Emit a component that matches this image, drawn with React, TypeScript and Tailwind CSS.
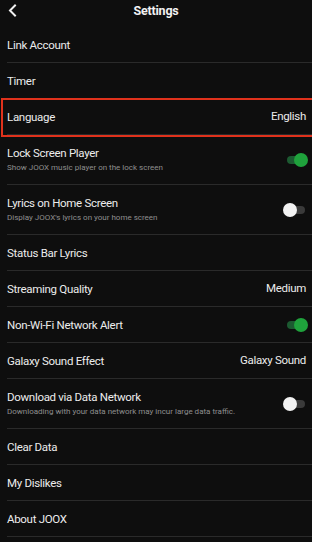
import React from 'react'

type Row = {
  title: string
  sub?: string
  value?: string
  toggle?: boolean
  highlight?: boolean
}

const ROWS: Row[] = [
  { title: 'Link Account' },
  { title: 'Timer' },
  { title: 'Language', value: 'English', highlight: true },
  { title: 'Lock Screen Player', sub: 'Show JOOX music player on the lock screen', toggle: true },
  { title: 'Lyrics on Home Screen', sub: "Display JOOX's lyrics on your home screen", toggle: false },
  { title: 'Status Bar Lyrics' },
  { title: 'Streaming Quality', value: 'Medium' },
  { title: 'Non-Wi-Fi Network Alert', toggle: true },
  { title: 'Galaxy Sound Effect', value: 'Galaxy Sound' },
  { title: 'Download via Data Network', sub: 'Downloading with your data network may incur large data traffic.', toggle: false },
  { title: 'Clear Data' },
  { title: 'My Dislikes' },
  { title: 'About JOOX' },
]

function Toggle({ on }: { on: boolean }) {
  return (
    <div className="relative w-[22px] h-[14px] mr-[5px]">
      <div
        className={`absolute left-[2px] right-[2px] top-[3px] h-[8px] rounded-full ${on ? 'bg-[#1c5a31]' : 'bg-[#3a3a3a]'}`}
      />
      <div
        className={`absolute top-0 w-[14px] h-[14px] rounded-full ${on ? 'right-[-1px] bg-[#1fa23c]' : 'left-[-2px] bg-[#f2f2f2]'}`}
      />
    </div>
  )
}

export default function App() {
  return (
    <div
      className="w-[312px] h-[542px] overflow-hidden bg-[#0e0e0e] text-[#e6e6e6]"
      style={{ fontFamily: 'Roboto, "Liberation Sans", sans-serif' }}
    >
      {/* header */}
      <div className="relative h-[27px] flex items-center justify-center">
        <svg className="absolute left-[8px] top-[4px]" width="9" height="13" viewBox="0 0 9 13">
          <path d="M7 1.5 L2 6.5 L7 11.5" fill="none" stroke="#f0f0f0" strokeWidth="2" strokeLinecap="square" />
        </svg>
        <span className="text-[12.5px] tracking-[-0.2px] font-bold text-[#f2f2f2] mt-[-5px]">Settings</span>
      </div>

      <div className="pl-[7px]">
        {ROWS.map((r) => (
          <div
            key={r.title}
            className={`relative flex items-center border-b border-[#2a2a2a] ${r.sub ? 'h-[50px]' : 'h-[36px]'}`}
          >
            {r.highlight && (
              <div className="absolute left-[-6px] right-[-4px] top-[-1px] bottom-[-3px] border-2 border-[#e0321c]" />
            )}
            <div className="flex-1 min-w-0">
              <div className="text-[11.5px] tracking-[-0.3px] leading-[16px] text-[#ececec]">{r.title}</div>
              {r.sub && (
                <div className="text-[8px] leading-[12px] mt-[1px] text-[#8f8f8f] whitespace-nowrap">{r.sub}</div>
              )}
            </div>
            {r.value && (
              <div className="text-[11.5px] tracking-[-0.3px] pr-[6px] text-[#ececec]">{r.value}</div>
            )}
            {r.toggle !== undefined && <Toggle on={r.toggle} />}
          </div>
        ))}
      </div>
    </div>
  )
}
